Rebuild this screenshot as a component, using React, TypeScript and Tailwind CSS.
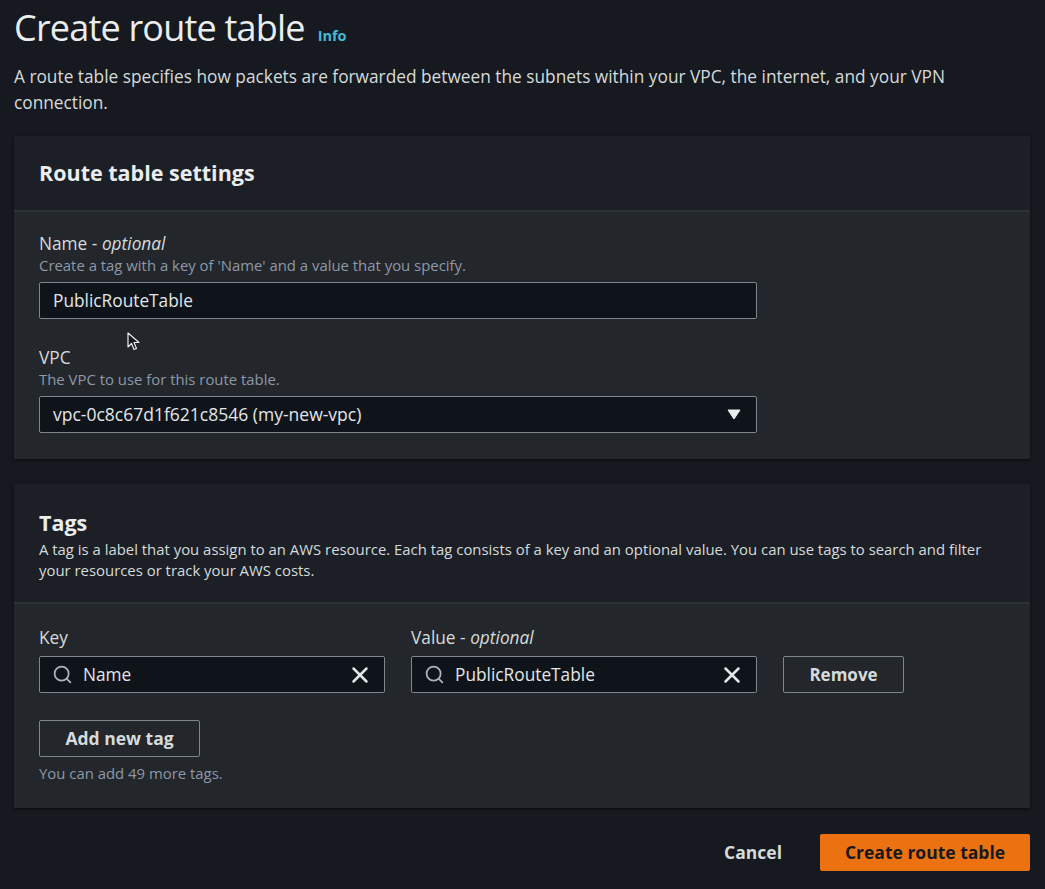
import { Search, X } from 'lucide-react';

function Label({ text, optional }: { text: string; optional?: boolean }) {
  return (
    <div className="text-[17.3px] leading-[23px] text-[#d5dbdb]">
      {text}
      {optional && (
        <>
          {' - '}
          <i>optional</i>
        </>
      )}
    </div>
  );
}

function Hint({ children }: { children: React.ReactNode }) {
  return <div className="text-[14.9px] leading-[20px] text-[#8d99a8]">{children}</div>;
}

function SearchInput({ value }: { value: string }) {
  return (
    <div className="flex h-[37px] w-[346px] items-center rounded-[2px] border border-[#7d8792] bg-[#0f141a] pl-[12px] pr-[11px] text-[17.3px] text-[#e3e6e9]">
      <Search size={21} strokeWidth={2} className="text-[#aab4be]" />
      <span className="ml-[10px] flex-1">{value}</span>
      <X size={26} strokeWidth={2.3} className="text-[#e3e6e9]" />
    </div>
  );
}

function Card({ title, desc, children }: { title: string; desc?: string; children: React.ReactNode }) {
  return (
    <section className="w-[1016px] bg-[#23262b] shadow-[0_1px_3px_rgba(0,0,0,0.6)]">
      <header className="border-b-2 border-[#2c3037] bg-[#1c1f26] px-[25px]">
        {desc ? (
          <div className="pt-[24px] pb-[21px]">
            <h2 className="text-[21.5px] font-bold leading-[30px] text-[#eaeded]">{title}</h2>
            <p className="mt-[1px] text-[14.9px] leading-[21px] text-[#d5dbdb]">{desc}</p>
          </div>
        ) : (
          <h2 className="py-[22px] text-[21.5px] font-bold leading-[30px] text-[#eaeded]">{title}</h2>
        )}
      </header>
      {children}
    </section>
  );
}

export default function App() {
  return (
    <div className="relative min-h-screen bg-[#16191f] px-[14px] pt-[6px] font-['Open_Sans',sans-serif]">
      <h1 className="flex items-baseline gap-[13px]">
        <span className="text-[36px] leading-[44px] tracking-[-0.8px] text-[#eaeded]">Create route table</span>
        <span className="text-[14.5px] font-bold text-[#44b9d6]">Info</span>
      </h1>
      <p className="mt-[14px] w-[1016px] text-[17.3px] leading-[26px] text-[#d5dbdb]">
        A route table specifies how packets are forwarded between the subnets within your VPC, the internet, and your VPN connection.
      </p>

      <div className="mt-[20px]">
        <Card title="Route table settings">
          <div className="px-[25px] pt-[20px] pb-[26px]">
            <Label text="Name" optional />
            <Hint>Create a tag with a key of 'Name' and a value that you specify.</Hint>
            <div className="mt-[7px] flex h-[37px] w-[718px] items-center rounded-[2px] border border-[#7d8792] bg-[#0f141a] px-[13px] text-[17.3px] text-[#e3e6e9]">
              PublicRouteTable
            </div>
            <div className="mt-[27px]">
              <Label text="VPC" />
              <Hint>The VPC to use for this route table.</Hint>
              <div className="mt-[7px] flex h-[37px] w-[718px] items-center justify-between rounded-[2px] border border-[#7d8792] bg-[#0f141a] pl-[13px] pr-[15px] text-[17.5px] text-[#e3e6e9]">
                <span>vpc-0c8c67d1f621c8546 (my-new-vpc)</span>
                <svg width="14" height="11" viewBox="0 0 14 11">
                  <path d="M1 1 H13 L7 10 Z" fill="#eaeded" stroke="#eaeded" strokeLinejoin="round" />
                </svg>
              </div>
            </div>
          </div>
        </Card>
      </div>

      <div className="mt-[25px]">
        <Card
          title="Tags"
          desc="A tag is a label that you assign to an AWS resource. Each tag consists of a key and an optional value. You can use tags to search and filter your resources or track your AWS costs."
        >
          <div className="px-[25px] pt-[22px] pb-[25px]">
            <div className="flex items-end gap-[26px]">
              <div>
                <Label text="Key" />
                <div className="mt-[7px]">
                  <SearchInput value="Name" />
                </div>
              </div>
              <div>
                <Label text="Value" optional />
                <div className="mt-[7px]">
                  <SearchInput value="PublicRouteTable" />
                </div>
              </div>
              <button className="h-[37px] w-[121px] rounded-[2px] border border-[#7d8792] text-[17px] font-bold text-[#d5dbdb]">
                Remove
              </button>
            </div>
            <button className="mt-[27px] h-[37px] w-[161px] rounded-[2px] border border-[#7d8792] text-[17.5px] font-bold text-[#d5dbdb]">
              Add new tag
            </button>
            <div className="mt-[6px]">
              <Hint>You can add 49 more tags.</Hint>
            </div>
          </div>
        </Card>
      </div>

      <div className="mt-[26px] flex w-[1016px] items-center justify-end gap-[38px] pb-[20px]">
        <button className="text-[17.5px] font-bold text-[#d5dbdb]">Cancel</button>
        <button className="h-[37px] w-[210px] rounded-[2px] bg-[#ec7211] text-[17.5px] font-bold text-[#16191f]">
          Create route table
        </button>
      </div>

      <svg className="absolute left-[127px] top-[332px]" width="13" height="19" viewBox="0 0 13 19">
        <path d="M1 1 L1 15 L4.5 11.5 L7 17.5 L9.5 16.5 L7 10.5 L12 10.5 Z" fill="#16191f" stroke="#eaeded" strokeWidth="1.2" strokeLinejoin="round" />
      </svg>
    </div>
  );
}
